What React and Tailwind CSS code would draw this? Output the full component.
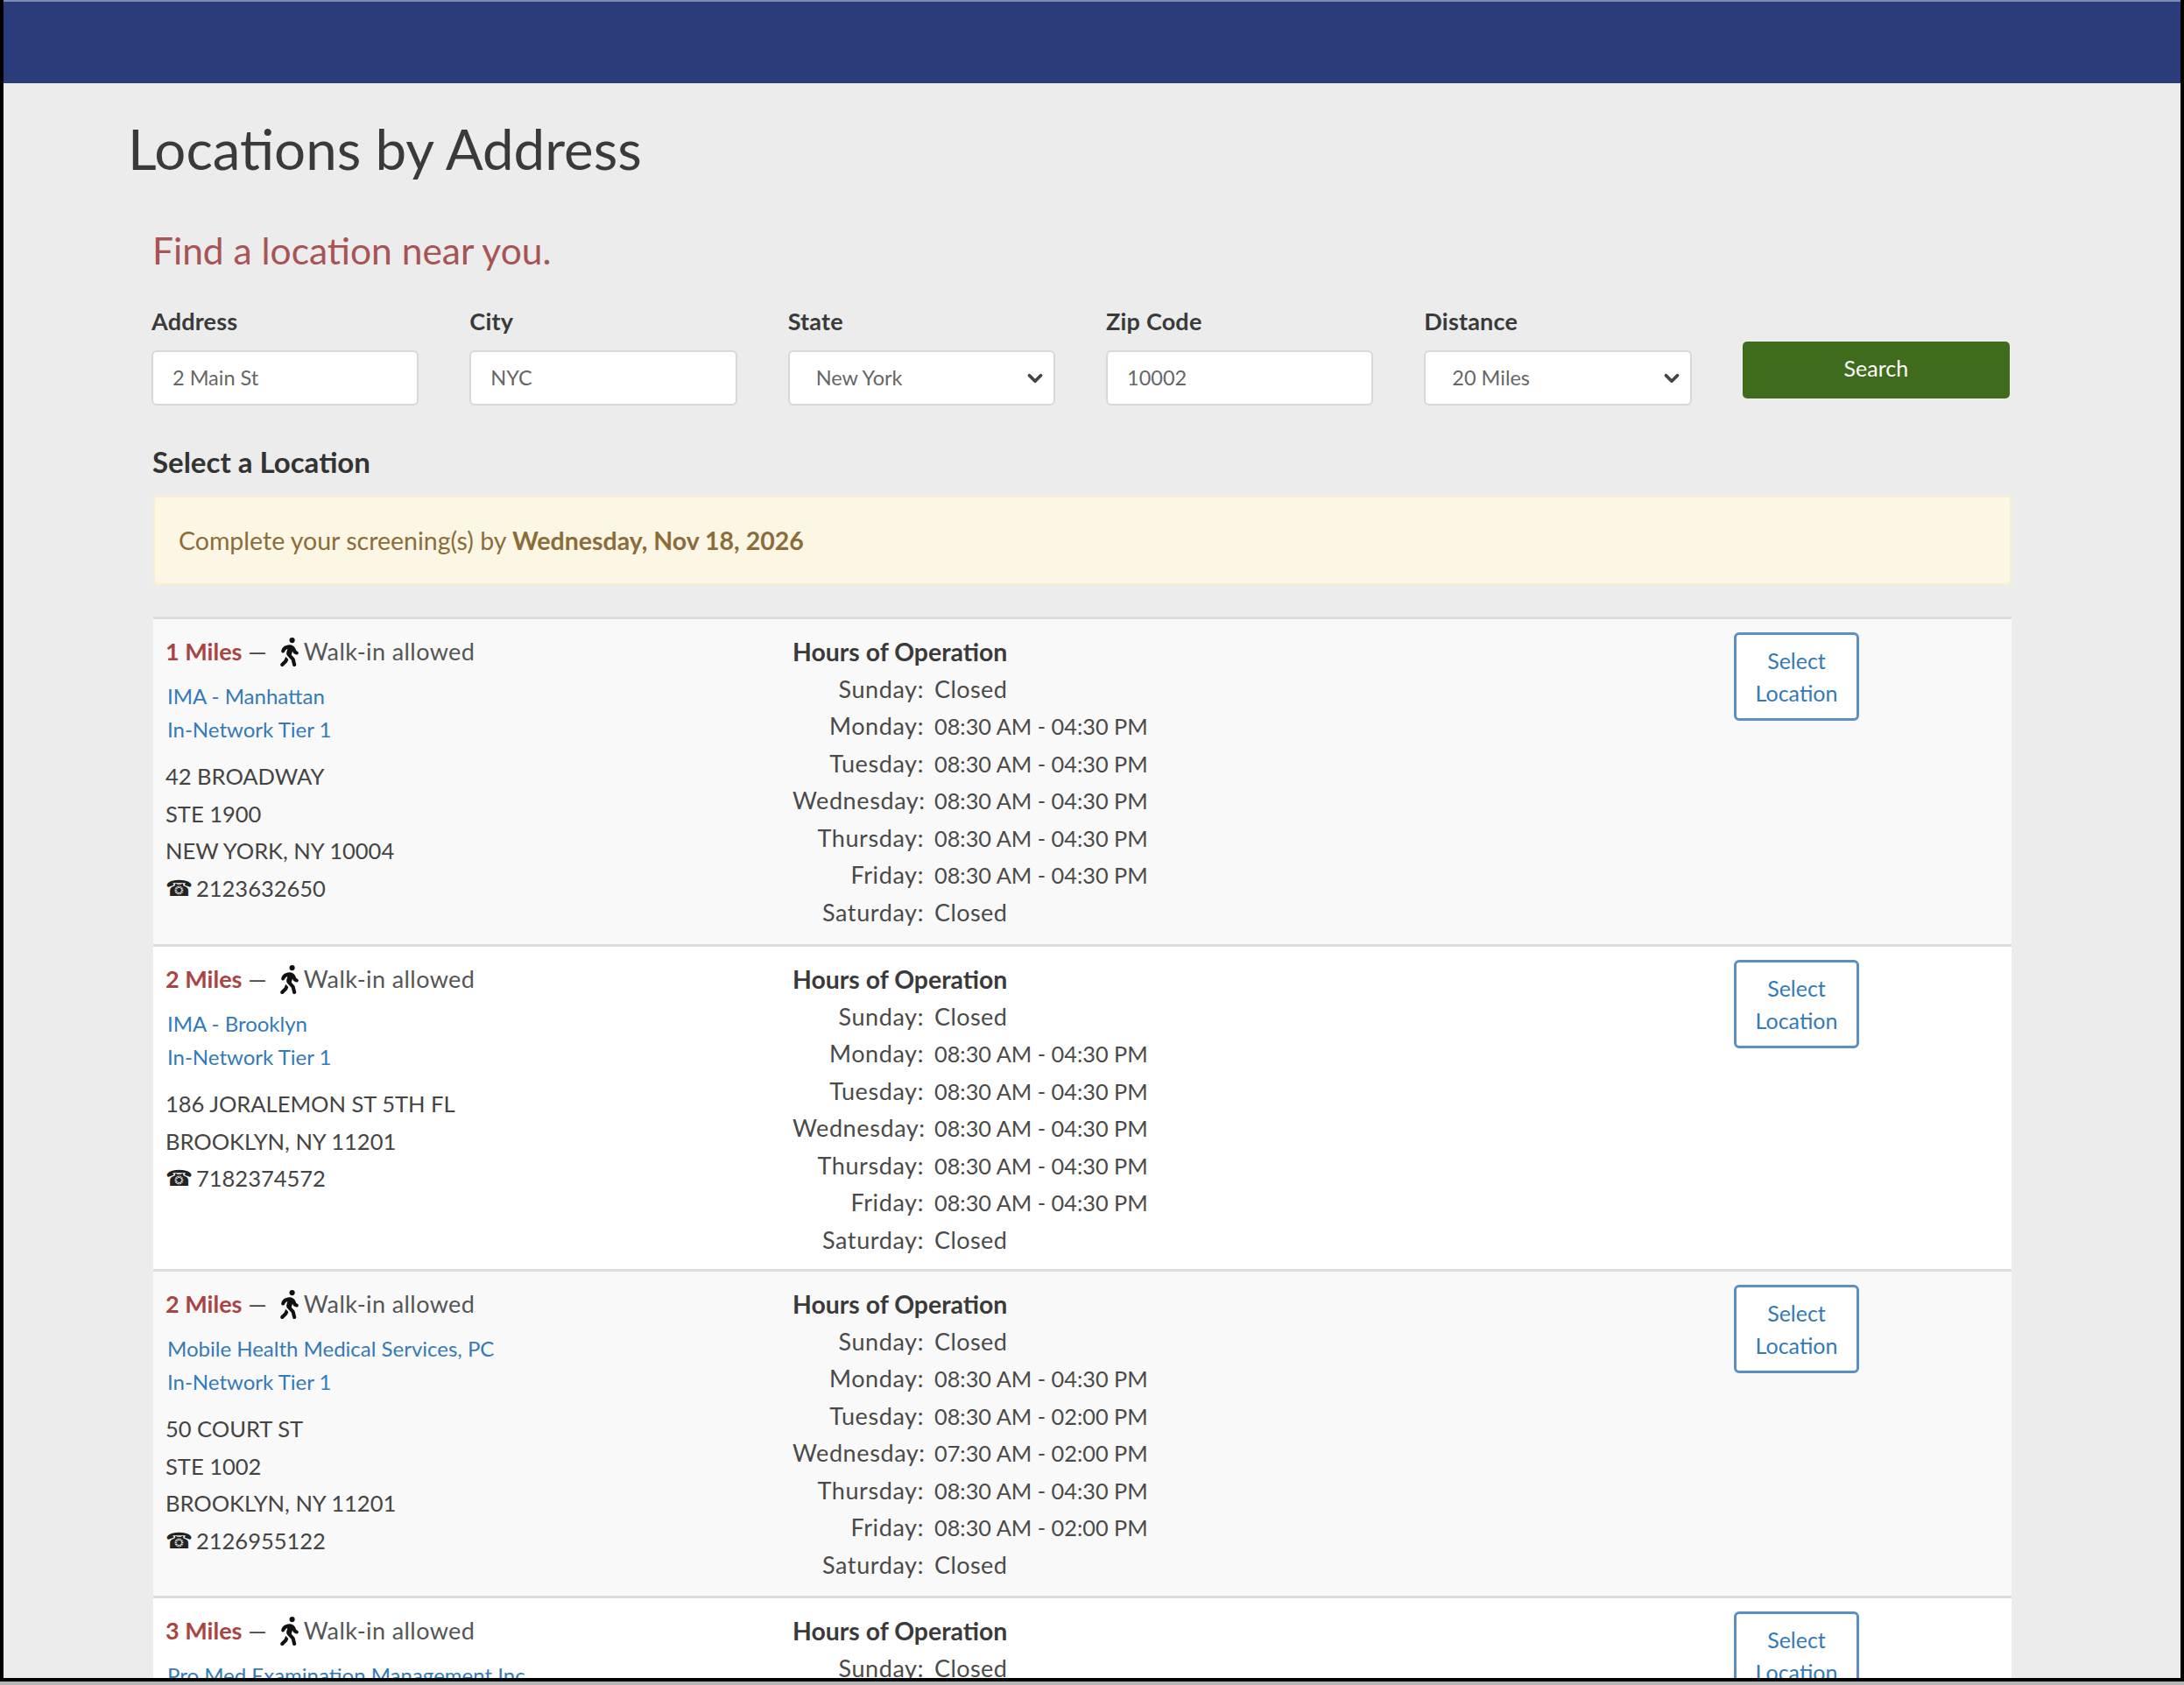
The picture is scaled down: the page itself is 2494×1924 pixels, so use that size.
import { FaPersonWalking } from "react-icons/fa6";
import { ChevronDown } from "lucide-react";

const week = ["Sunday", "Monday", "Tuesday", "Wednesday", "Thursday", "Friday", "Saturday"];
const std = "08:30 AM - 04:30 PM";

const locations = [
  {
    miles: 1,
    name: "IMA - Manhattan",
    address: ["42 BROADWAY", "STE 1900", "NEW YORK, NY 10004"],
    phone: "2123632650",
    hours: ["Closed", std, std, std, std, std, "Closed"],
    height: "h-[374px]",
    bg: "bg-[#f9f9f9]",
  },
  {
    miles: 2,
    name: "IMA - Brooklyn",
    address: ["186 JORALEMON ST 5TH FL", "BROOKLYN, NY 11201"],
    phone: "7182374572",
    hours: ["Closed", std, std, std, std, std, "Closed"],
    height: "h-[371px]",
    bg: "bg-white",
  },
  {
    miles: 2,
    name: "Mobile Health Medical Services, PC",
    address: ["50 COURT ST", "STE 1002", "BROOKLYN, NY 11201"],
    phone: "2126955122",
    hours: ["Closed", "08:30 AM - 04:30 PM", "08:30 AM - 02:00 PM", "07:30 AM - 02:00 PM", std, "08:30 AM - 02:00 PM", "Closed"],
    height: "h-[373px]",
    bg: "bg-[#f9f9f9]",
  },
  {
    miles: 3,
    name: "Pro Med Examination Management Inc",
    address: [],
    phone: "",
    hours: ["Closed"],
    height: "h-[374px]",
    bg: "bg-white",
  },
];

function Field({ label, value, select }) {
  return (
    <div>
      <div className="text-[27px] leading-[32px] font-bold text-[#3a3a3a] tracking-[0.2px]">{label}</div>
      <div className="mt-[17px] h-[63px] bg-white border-2 border-[#d8d8d8] rounded-[6px] flex items-center justify-between text-[23.5px] text-[#666] pl-[22px] pr-[8px]">
        <span className={select ? "pl-[8px]" : ""}>{value}</span>
        {select && <ChevronDown size={26} strokeWidth={3.5} className="text-[#444]" />}
      </div>
    </div>
  );
}

function LocationRow({ loc }) {
  return (
    <div className={`${loc.height} ${loc.bg} border-t-[3px] border-[#ddd] flex`}>
      <div className="w-[730px] pl-[14px] pt-[15px] shrink-0 text-[25.5px] text-[#444]">
        <div className="h-[44px] flex items-center whitespace-pre text-[27px]">
          <span className="font-bold text-[#a94442]">{loc.miles} Miles</span>
          <span className="mr-[9px]"> —</span>
          <FaPersonWalking className="text-[#111] text-[33px]" />
          <span className="text-[#555] tracking-[0.4px]">Walk-in allowed</span>
        </div>
        <div className="mt-[10px] pl-[2px] text-[24px] leading-[38px] text-[#337ab7]">
          <div>{loc.name}</div>
          <div>In-Network Tier 1</div>
        </div>
        <div className="mt-[13px] leading-[42.6px]">
          {loc.address.map((line) => (
            <div key={line}>{line}</div>
          ))}
          {loc.phone && (
            <div className="flex items-center">
              <span className="w-[35px] text-[25px] font-['DejaVu_Sans'] leading-none text-[#222]">☎</span>
              {loc.phone}
            </div>
          )}
        </div>
      </div>
      <div className="pt-[16px] text-[27px] leading-[42.5px] text-[#4a4a4a] w-[1075px] shrink-0">
        <div className="font-bold text-[28.4px] text-[#3a3a3a]">Hours of Operation</div>
        {loc.hours.map((h, i) => (
          <div key={week[i]} className="flex">
            <span className="w-[150px] text-right tracking-[0.6px]">{week[i]}:</span>
            <span className={h === "Closed" ? "ml-[12px] tracking-[0.4px]" : "ml-[12px] text-[25.3px]"}>{h}</span>
          </div>
        ))}
      </div>
      <div className="pt-[15px]">
        <button className="w-[143px] h-[101px] bg-white border-[3px] border-[#5b8fc7] rounded-[6px] text-[25px] leading-[37px] text-[#337ab7]">
          Select
          <br />
          Location
        </button>
      </div>
    </div>
  );
}

export default function App() {
  return (
    <div className="h-screen overflow-hidden bg-[#b5b5b5] font-['Lato','Noto_Sans',sans-serif]">
      <div className="h-[1920px] overflow-hidden border-l-[4px] border-r-[4px] border-b-[4px] border-[#000] bg-[#ececec]">
        <div className="h-[95px] bg-[#2a3c7a] border-t-[2px] border-[#7d8ab0]" />
        <div className="pl-[142px]">
          <h1 className="pt-[36px] text-[63.6px] leading-[78px] font-normal text-[#3a3a3a]">Locations by Address</h1>
        </div>
        <div className="ml-[171px] w-[2122px]">
          <h2 className="-ml-[1px] mt-[51px] text-[42.5px] leading-[52px] font-normal text-[#a85454]">Find a location near you.</h2>
          <div className="-ml-[2px] w-[2122px] mt-[39px] grid grid-cols-6 gap-x-[58px] items-start">
            <Field label="Address" value="2 Main St" />
            <Field label="City" value="NYC" />
            <Field label="State" value="New York" select />
            <Field label="Zip Code" value="10002" />
            <Field label="Distance" value="20 Miles" select />
            <button className="mt-[39px] h-[65px] pb-[3px] bg-[#3e6b1c] rounded-[5px] text-white text-[25px]">Search</button>
          </div>
          <div className="-ml-[1px] mt-[45px] text-[33px] leading-[38px] font-bold text-[#333]">Select a Location</div>
          <div className="mt-[20px] h-[102px] bg-[#fbf7e4] border-2 border-[#f8efd0] rounded-[4px] flex items-center pl-[27px] text-[28.5px] text-[#8a6d3b]">
            <span>
              Complete your screening(s) by <b>Wednesday, Nov 18, 2026</b>
            </span>
          </div>
          <div className="mt-[36px]">
            {locations.map((loc) => (
              <LocationRow key={loc.name} loc={loc} />
            ))}
          </div>
        </div>
      </div>
    </div>
  );
}
